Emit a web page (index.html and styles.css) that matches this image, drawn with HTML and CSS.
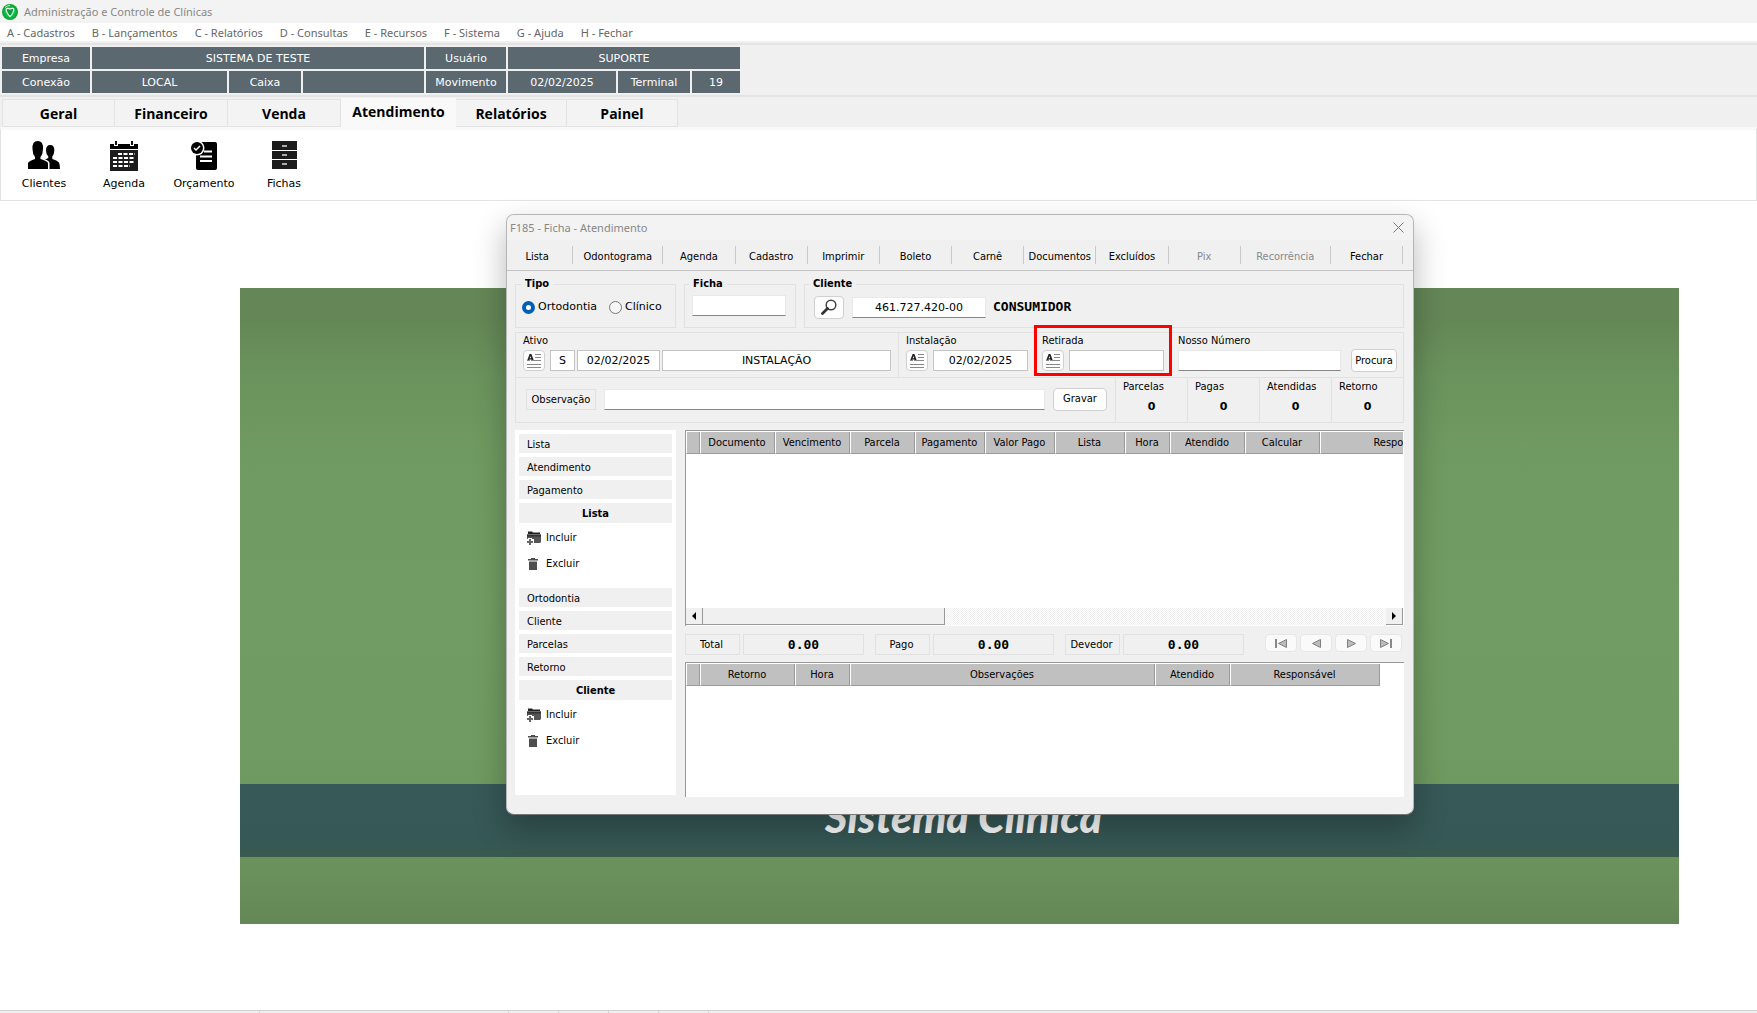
FILE: index.html
```html
<!DOCTYPE html>
<html lang="pt-BR">
<head>
<meta charset="utf-8">
<title>Administração e Controle de Clínicas</title>
<link rel="stylesheet" href="styles.css">
</head>
<body>
<svg class="defs" aria-hidden="true">
  <symbol id="i-note" viewBox="0 0 14 14"><path d="M0 7L2.600 0H4.400L7 7H4.800L4.400 5.500H2.400L2 7ZM2.700 4.300H4.100L3.400 2Z" fill="#222"/><path d="M0 6.500h3M4 6.500h4M8 .5h6M8 3.500h6M8 6.500h6M0 10.500h14M0 13.500h14" stroke="#888"/></symbol>
  <symbol id="i-folder" viewBox="0 0 14 14"><path d="M1 2V0.500H5L6 1.500H13V3H1Z" fill="#222"/><path d="M0 3.500H14V11L13 12H7V8H0Z" fill="#555"/><path d="M0 3.500H14V5.500H0Z" fill="#333"/><path d="M3 7v7M0 11h7" stroke="#fff" stroke-width="4"/><path d="M3 8v6M0 11h6" stroke="#666" stroke-width="2"/></symbol>
  <symbol id="i-trash" viewBox="0 0 10 12"><path d="M3 0H7V1H10V2.500H0V1H3ZM1 3.500H9V12H1Z" fill="#4d4d4d"/></symbol>
</svg>
<div class="app">
  <header class="titlebar">
    <svg width="16" height="16" viewBox="0 0 16 16"><circle cx="8" cy="8" r="8" fill="#13a538"/><circle cx="8" cy="8" r="6" fill="#06c04a"/><path d="M4.500 4.500Q6.200 4 8 5Q9.800 4 11.500 4.500Q12.300 6.500 10.800 9Q9.500 11.500 8 12.500Q6.500 11.500 5.200 9Q3.700 6.500 4.500 4.500Z" fill="#0aa040" stroke="#e8ffe8" stroke-width="1.200"/><path d="M3 3.500Q5 1.500 8 1.500" stroke="#b8f0b8" fill="none"/></svg>
    <span>Administração e Controle de Clínicas</span>
  </header>
  <nav class="menu">
    <a href="#">A - Cadastros</a><a href="#">B - Lançamentos</a><a href="#">C - Relatórios</a><a href="#">D - Consultas</a><a href="#">E - Recursos</a><a href="#">F - Sistema</a><a href="#">G - Ajuda</a><a href="#">H - Fechar</a>
  </nav>
  <section class="info">
    <span>Empresa</span><span class="span3">SISTEMA DE TESTE</span><span>Usuário</span><span class="span3">SUPORTE</span>
    <span>Conexão</span><span>LOCAL</span><span>Caixa</span><span></span><span>Movimento</span><span>02/02/2025</span><span>Terminal</span><span>19</span>
  </section>
  <nav class="tabs">
    <button>Geral</button><button>Financeiro</button><button>Venda</button><button class="active">Atendimento</button><button>Relatórios</button><button>Painel</button>
  </nav>
  <section class="ribbon">
    <button><svg width="32" height="28" viewBox="0 0 32 28"><path d="M0 28V22Q1 20 7 18V16Q4.500 13 4.500 8Q4 0 9.700 0Q15.500 0 15 8Q15 13 12.500 16V18Q19 20 20 22V28Z"/><path d="M21.500 28V22Q21 19.500 17 18.500L20.300 17V15.500Q18 13 18 9.500Q18 4 22.200 4Q26.500 4 26.300 9.500Q26.300 13 24.300 15.500V18Q29 19 31 21.500Q32 24 32 28Z"/></svg>Clientes</button>
    <button><svg width="28" height="30" viewBox="0 0 28 30"><path d="M0 3H4V5H8V3H20V5H24V3H28V8H0Z"/><path d="M6 0V4M22 0V4" stroke="#111" stroke-width="2"/><path d="M0 9H28V30H0Z" fill="#1c1c1c"/><path d="M8 13h17M3 17h22M3 21h22M3 25h17" stroke="#fff" stroke-width="2" stroke-dasharray="4 1.500"/></svg>Agenda</button>
    <button><svg width="28" height="29" viewBox="0 0 28 29"><path d="M9 1H25Q27 1 27 3V27Q27 29 25 29H8Q6 29 6 27V9Z"/><circle cx="7" cy="7" r="7.500" fill="#fff"/><circle cx="7" cy="7" r="6"/><path d="M4 7l2 2 4-4" stroke="#fff" stroke-width="1.500" fill="none"/><path d="M14 10.500h8M10 15.500h12M10 20h12" stroke="#fff" stroke-width="2"/></svg>Orçamento</button>
    <button><svg width="25" height="28" viewBox="0 0 25 28"><path d="M0 0H25V9H0ZM0 10H25V18H0ZM0 19H25V28H0Z" fill="#1b1b1b"/><path d="M10 5h5M10 14h5M10 23h5" stroke="#ddd" stroke-width="1.500"/></svg>Fichas</button>
  </section>
  <main class="desktop">
    <div class="wallpaper">
      <div class="band">Sistema Clínica</div>
      <section class="window">
        <header class="wtitle"><span>F185 - Ficha - Atendimento</span><button aria-label="Fechar janela"><svg width="11" height="11" viewBox="0 0 11 11"><path d="M.5.5l10 10M10.500.5l-10 10" stroke="#777" fill="none"/></svg></button></header>
        <nav class="wtools">
          <button class="narrow">Lista</button><button class="wide">Odontograma</button><button>Agenda</button><button>Cadastro</button><button>Imprimir</button><button>Boleto</button><button>Carnê</button><button>Documentos</button><button>Excluídos</button><button disabled>Pix</button><button disabled class="wide">Recorrência</button><button>Fechar</button>
        </nav>
        <div class="wbody">
          <div class="groups">
            <fieldset class="tipo"><legend>Tipo</legend><div class="line">
              <label><input type="radio" name="tipo" checked>Ortodontia</label><label><input type="radio" name="tipo">Clínico</label></div></fieldset>
            <fieldset class="ficha"><legend>Ficha</legend><div class="line"><input class="under" type="text" aria-label="Ficha"></div></fieldset>
            <fieldset class="cliente"><legend>Cliente</legend><div class="line">
              <button class="btn search" aria-label="Pesquisar cliente"><svg width="16" height="16" viewBox="0 0 16 16"><circle cx="10" cy="6" r="4.800" fill="#fff" stroke="#444" stroke-width="1.500"/><path d="M6.500 9.500L1.500 14.500" stroke="#333" stroke-width="2.800" stroke-linecap="round"/></svg></button>
              <input class="under" type="text" value="461.727.420-00" aria-label="CPF do cliente"><b class="mono">CONSUMIDOR</b></div></fieldset>
          </div>
          <div class="panel">
            <div class="row dates">
              <div class="field ativo"><label for="ativo">Ativo</label><div class="ctl"><button class="btn note" aria-label="Editar ativo"><svg width="14" height="14"><use href="#i-note"/></svg></button><input class="box w-s" id="ativo" value="S"><input class="box w-date" value="02/02/2025" aria-label="Data do ativo"><input class="box grow" value="INSTALAÇÃO" aria-label="Situação"></div></div>
              <div class="field inst"><label for="inst">Instalação</label><div class="ctl"><button class="btn note" aria-label="Editar instalação"><svg width="14" height="14"><use href="#i-note"/></svg></button><input class="box grow" id="inst" value="02/02/2025"></div></div>
              <div class="field inst marked"><label for="ret">Retirada</label><div class="ctl"><button class="btn note" aria-label="Editar retirada"><svg width="14" height="14"><use href="#i-note"/></svg></button><input class="box grow" id="ret"></div></div>
              <div class="field nosso"><label for="nosso">Nosso Número</label><div class="ctl"><input class="under grow" id="nosso"><button class="btn procura">Procura</button></div></div>
            </div>
            <div class="row">
              <div class="obs"><label for="obs">Observação</label><input class="under grow" id="obs"><button class="btn gravar">Gravar</button></div>
              <div class="count">Parcelas<b>0</b></div><div class="count">Pagas<b>0</b></div><div class="count">Atendidas<b>0</b></div><div class="count">Retorno<b>0</b></div>
            </div>
          </div>
          <div class="lower">
            <aside class="side">
              <button class="item">Lista</button><button class="item">Atendimento</button><button class="item">Pagamento</button>
              <h2>Lista</h2>
              <button class="act"><svg width="14" height="14"><use href="#i-folder"/></svg>Incluir</button>
              <button class="act"><svg class="trash" width="10" height="12"><use href="#i-trash"/></svg>Excluir</button>
              <button class="item apart">Ortodontia</button><button class="item">Cliente</button><button class="item">Parcelas</button><button class="item">Retorno</button>
              <h2>Cliente</h2>
              <button class="act"><svg width="14" height="14"><use href="#i-folder"/></svg>Incluir</button>
              <button class="act"><svg class="trash" width="10" height="12"><use href="#i-trash"/></svg>Excluir</button>
            </aside>
            <div class="data">
              <div class="gridbox first">
                <div class="clip"><table class="t1"><colgroup><col class="c14"><col class="c75"><col class="c75"><col class="c65"><col class="c70"><col class="c70"><col class="c70"><col class="c45"><col class="c75"><col class="c75"><col class="c170"></colgroup>
                <thead><tr><th></th><th>Documento</th><th>Vencimento</th><th>Parcela</th><th>Pagamento</th><th>Valor Pago</th><th>Lista</th><th>Hora</th><th>Atendido</th><th>Calcular</th><th>Responsável</th></tr></thead></table></div>
                <div class="hscroll"><button aria-label="Rolar para a esquerda"><svg width="4" height="8" viewBox="0 0 4 8"><path d="M4 0V8L0 4Z"/></svg></button><div class="thumb"></div><div class="track"></div><button aria-label="Rolar para a direita"><svg width="4" height="8" viewBox="0 0 4 8"><path d="M0 0V8L4 4Z"/></svg></button></div>
              </div>
              <div class="totals">
                <span class="cap">Total</span><b class="mono val">0.00</b>
                <span class="cap">Pago</span><b class="mono val">0.00</b>
                <span class="cap">Devedor</span><b class="mono val">0.00</b>
                <div class="nav">
                  <button aria-label="Primeiro"><svg width="12" height="9" viewBox="0 0 12 9"><path d="M0 0h2v9H0Z" fill="#888"/><path d="M11.500.5v8L3.500 4.500Z" fill="#bbb" stroke="#808080"/></svg></button>
                  <button aria-label="Anterior"><svg width="12" height="9" viewBox="0 0 12 9"><path d="M10.500.5v8L2.500 4.500Z" fill="#bbb" stroke="#808080"/></svg></button>
                  <button aria-label="Próximo"><svg width="12" height="9" viewBox="0 0 12 9"><path d="M2.500.5v8L10.500 4.500Z" fill="#bbb" stroke="#808080"/></svg></button>
                  <button aria-label="Último"><svg width="12" height="9" viewBox="0 0 12 9"><path d="M10 0h2v9h-2Z" fill="#888"/><path d="M.5.5v8L8.500 4.500Z" fill="#bbb" stroke="#808080"/></svg></button>
                </div>
              </div>
              <div class="gridbox fill">
                <div class="clip"><table class="t2"><colgroup><col class="c14"><col class="c95"><col class="c55"><col class="c305"><col class="c75"><col class="c150"></colgroup>
                <thead><tr><th></th><th>Retorno</th><th>Hora</th><th>Observações</th><th>Atendido</th><th>Responsável</th></tr></thead></table></div>
              </div>
            </div>
          </div>
        </div>
      </section>
    </div>
  </main>
  <footer class="status"><i></i><i></i><i></i><i></i><i></i><i></i></footer>
</div>
</body>
</html>
```
FILE: styles.css
```css
* { box-sizing: border-box; }
body { margin: 0; background: #fff; font: 11px/14px "DejaVu Sans Condensed", "DejaVu Sans", sans-serif; color: #000; }
button { font: inherit; color: inherit; background: none; border: 0; padding: 0; margin: 0; }
input { font: 11px/14px "DejaVu Sans", sans-serif; color: #000; margin: 0; min-width: 0; text-align: center; padding: 0 4px; border-radius: 0; }
svg { display: block; flex: none; }
.defs { position: absolute; width: 0; height: 0; }
.app { display: flex; flex-direction: column; min-height: 100vh; background: #f0f0f0; }

/* Application frame */
.titlebar { height: 23px; background: #f3f3f3; display: flex; align-items: center; gap: 6px; padding-left: 2px; font: 11px/16px "Noto Sans", sans-serif; color: #888; }
.menu { height: 18px; background: #fff; display: flex; align-items: center; gap: 17px; padding: 1px 0 0 7px; font: 11px/16px "Noto Sans", sans-serif; }
.menu a { color: #666; text-decoration: none; white-space: nowrap; }
.info { display: grid; grid-template-columns: 88px 135px 72px 121px 80px 108px 72px 48px; grid-auto-rows: 22px; gap: 2px; padding: 2px; margin-top: 2px; border-top: 2px solid #e3e3e3; border-bottom: 2px solid #e3e3e3; font-family: "DejaVu Sans", sans-serif; }
.info span { background: #5b6870; color: #fff; display: flex; align-items: center; justify-content: center; padding-top: 2px; }
.info .span3 { grid-column: span 3; }
.tabs { display: flex; align-items: flex-end; padding-left: 2px; height: 29px; margin-top: 1px; font: bold 14px/18px "Open Sans", sans-serif; }
.tabs button { width: 113px; height: 28px; background: #f3f3f3; border: 1px solid #e3e3e3; border-left: 0; padding-top: 2px; }
.tabs button:first-child { border-left: 1px solid #e3e3e3; }
.tabs .active { width: 115px; height: 29px; background: #f9f9f9; border: 0; padding: 0 0 1px; }
.tabs .active ~ button { width: 111px; }
.ribbon { display: flex; align-items: flex-start; height: 74px; background: #fff; border: 1px solid #e3e3e3; border-top: 3px solid #f9f9f9; padding: 11px 3px 0; font-family: "DejaVu Sans", sans-serif; }
.ribbon button { width: 80px; height: 50px; display: flex; flex-direction: column; align-items: center; justify-content: space-between; }
.desktop { flex: 1; display: flex; background: #fff; padding: 87px 78px 86px 240px; }
.status { height: 3px; border-top: 1px solid #d0d0d0; display: flex; }
.status i { width: 50px; border-right: 1px solid #d0d0d0; }
.status i:first-child { width: 260px; }
.status i:nth-child(2) { width: 249px; }

/* Wallpaper */
.wallpaper { flex: 1; min-height: 636px; position: relative; display: flex; flex-direction: column; justify-content: flex-end; padding-bottom: 67px; background: linear-gradient(#658757, #658757 5%, #6b935d 14%, #6f9a61 26%, #719c63 50%, #6f9a61 76%, #6b925d 90%, #658757); }
.band { height: 73px; background: linear-gradient(#375958, #365856 80%, #3a5a4e); color: #fff; text-align: center; font: italic 900 43px/65px Lato, sans-serif; padding-left: 8px; }

/* Dialog window */
.window { position: absolute; top: -74px; left: 266px; right: 265px; min-height: 601px; display: flex; flex-direction: column; background: #f0f0f0; border: 1px solid #b5b5b5; border-bottom-color: #777; border-radius: 8px; box-shadow: 0 14px 30px 2px rgba(0,0,0,.25); overflow: clip; }
.wtitle { height: 25px; background: #f3f3f3; display: flex; align-items: center; justify-content: space-between; padding: 0 9px 0 3px; color: #888; font: 11px/16px "Noto Sans", sans-serif; }
.wtools { height: 31px; display: flex; align-items: center; border-bottom: 1px solid #c4c4c4; padding-right: 10px; }
.wtools button { flex: 1 1 72px; height: 18px; border-right: 1px solid #c8c8c8; padding-top: 3px; }
.wtools .wide { flex-basis: 90px; }
.wtools .narrow { flex-basis: 66px; padding-right: 5px; }
.wtools button:disabled { color: #888; }
.wbody { flex: 1; display: flex; flex-direction: column; padding: 6px 9px 17px 8px; }

.groups { display: flex; gap: 8px; }
fieldset { border: 1px solid #e1e1e1; margin: 0; padding: 0 8px; height: 51px; min-width: 0; }
legend { font-weight: bold; padding: 0 4px; }
.tipo { width: 161px; padding: 0 6px; }
.tipo legend { margin-left: -1px; }
.ficha { width: 112px; padding: 0 7px; }
.ficha legend { margin-left: -3px; }
.cliente { flex: 1; padding: 0 9px; }
.cliente legend { margin-left: -5px; }
.line { display: flex; align-items: center; height: 32px; font-family: "DejaVu Sans", sans-serif; }
.ficha .line { height: 29px; }
.line label { display: flex; align-items: center; gap: 3px; margin-right: 12px; }
.line input[type=radio] { appearance: none; width: 13px; height: 13px; border: 1px solid #777; border-radius: 50%; background: #f6f6f6; padding: 0; }
.line input[type=radio]:checked { border: 4px solid #005fb8; background: #fff; }
.under { height: 21px; border: 1px solid #e8e8e8; border-bottom-color: #868686; background: #fff; }
.ficha .under { width: 94px; }
.cliente .under { width: 134px; margin: 0 7px 0 8px; }
.btn { background: #fdfdfd; border: 1px solid #d0d0d0; border-radius: 4px; display: flex; align-items: center; justify-content: center; flex: none; }
.search { width: 30px; height: 23px; }
.mono { font: bold 13px/16px "DejaVu Sans Mono", monospace; }

.panel { border: 1px solid #e1e1e1; margin-top: 4px; }
.row { display: flex; height: 44px; }
.row + .row { height: 45px; border-top: 1px solid #e1e1e1; }
.field { padding: 1px 7px 0; display: flex; flex-direction: column; gap: 2px; }
.ctl { display: flex; align-items: center; gap: 5px; height: 21px; }
.ativo { flex: 1; border-right: 1px solid #e1e1e1; }
.ativo .ctl { gap: 2px; }
.ativo .note { margin-right: 3px; }
.inst { width: 136px; }
.nosso { width: 232px; padding-right: 6px; }
.nosso .ctl { gap: 10px; }
.note { width: 22px; height: 21px; }
.box { height: 21px; border: 1px solid #c4c4c4; background: #fff; }
.w-s { width: 25px; }
.w-date { width: 83px; }
.grow { flex: 1; width: 0; }
.procura { width: 46px; height: 23px; }
.gravar { width: 54px; height: 23px; }
.marked { position: relative; }
.marked::after { content: ""; position: absolute; inset: -8px -1px 1px; border: 3px solid #f00; pointer-events: none; }
.obs { flex: 1; display: flex; align-items: center; gap: 8px; padding: 0 8px 2px 10px; }
.obs label { width: 70px; height: 21px; line-height: 19px; border: 1px solid #e1e1e1; text-align: center; }
.count { width: 72px; border-left: 1px solid #e1e1e1; padding: 2px 7px 0; }
.count b { display: block; text-align: center; padding-top: 6px; font-family: "DejaVu Sans", sans-serif; }

.lower { flex: 1; display: flex; gap: 9px; margin-top: 7px; }
.side { width: 161px; background: #fff; padding: 4px; margin-bottom: 2px; display: flex; flex-direction: column; }
.item { height: 19px; background: #f0f0f0; margin-bottom: 4px; text-align: left; padding: 2px 0 0 8px; }
.side h2 { margin: 0 0 1px; padding-top: 1px; font-size: 11px; line-height: 19px; background: #f0f0f0; text-align: center; }
.act { height: 26px; display: flex; align-items: center; gap: 5px; padding: 1px 0 0 8px; }
.act .trash { margin: 0 3px 0 1px; }
.apart { margin-top: 12px; }

.data { flex: 1; min-width: 0; display: flex; flex-direction: column; }
.gridbox { background: #fff; border-left: 1px solid #999; border-top: 1px solid #999; display: flex; flex-direction: column; }
.first { height: 196px; padding: 0 1px 1px 0; }
.fill { flex: 1; }
.clip { flex: 1; overflow: hidden; padding-top: 1px; }
table { border-collapse: separate; border-spacing: 0; table-layout: fixed; }
.t1 { width: 804px; }
.t2 { width: 694px; }
th { height: 22px; padding: 1px 1px 0 0; font-weight: normal; background: #c0c0c0; border-left: 1px solid #fff; border-right: 1px solid #999; border-bottom: 1px solid #999; }
.c14 { width: 14px; } .c45 { width: 45px; } .c55 { width: 55px; } .c65 { width: 65px; } .c70 { width: 70px; } .c75 { width: 75px; }
.c95 { width: 95px; } .c150 { width: 150px; } .c170 { width: 170px; } .c305 { width: 305px; }
.hscroll { height: 17px; display: flex; }
.hscroll button { width: 17px; background: #f0f0f0; border-right: 1px solid #999; border-bottom: 1px solid #999; display: flex; align-items: center; justify-content: center; }
.thumb { width: 242px; background: #f0f0f0; border-right: 1px solid #999; border-bottom: 1px solid #999; }
.track { flex: 1; background: repeating-conic-gradient(#f0f0f0 0 25%, #fff 0 50%) 0 0 / 2px 2px; }
.totals { display: flex; height: 21px; margin: 8px 0 7px; }
.cap, .val { border: 1px solid #e1e1e1; text-align: center; line-height: 19px; }
.cap { width: 55px; margin-right: 3px; padding-right: 2px; }
.val { width: 121px; margin-right: 11px; }
.nav { margin-left: auto; display: flex; gap: 3px; padding-right: 2px; }
.nav button { width: 32px; height: 18px; background: #fafafa; border: 1px solid #e6e6e6; border-radius: 4px; display: flex; align-items: center; justify-content: center; }
```
